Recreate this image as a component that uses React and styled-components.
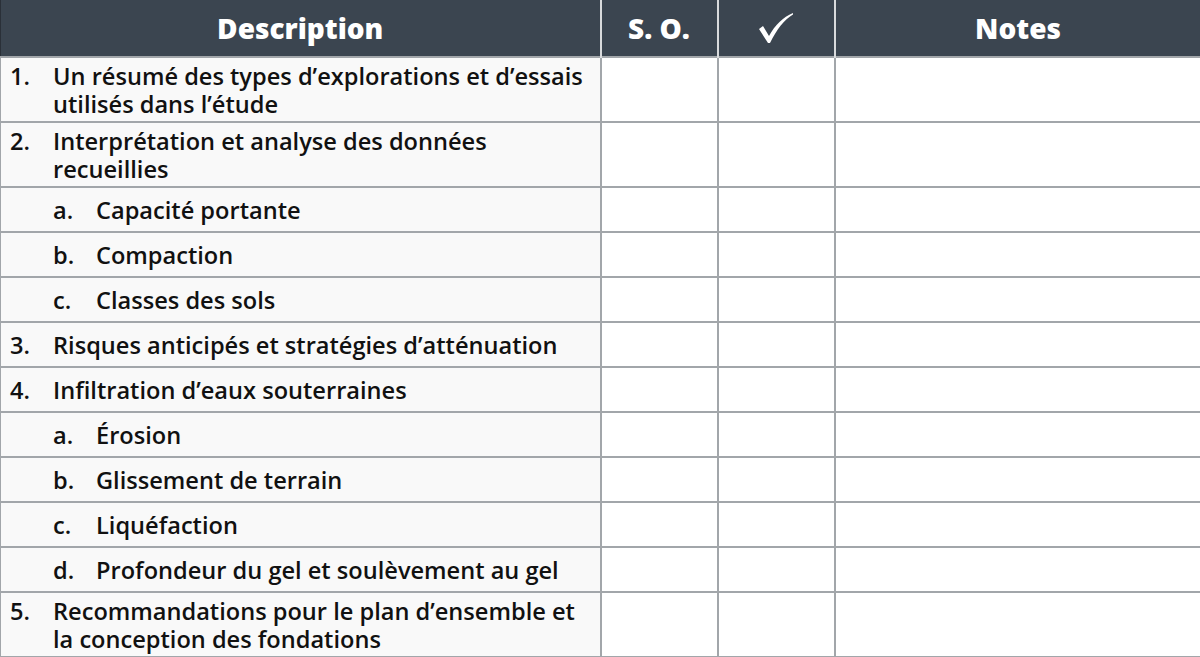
import React from 'react';
import styled, { createGlobalStyle } from 'styled-components';

const Global = createGlobalStyle`
    body {
        margin:0;
        background:#ffffff;
        font-family:"Open Sans", "Noto Sans", sans-serif;
    }
`;

const Table = styled.table`
    width:1200px;
    border-collapse:collapse;
    table-layout:fixed;
    color:#111111;
`;

const Head = styled.th`
    background-color:#3b4550;
    color:#ffffff;
    font-weight:800;
    font-size:28px;
    height:56px;
    padding:0;
    text-align:center;
    border-left:2px solid #d8dadc;
    &:first-child {
        border-left:1px solid #2a3038;
    }
`;

const Check = styled.svg`
    display:block;
    margin:0 auto;
    width:36px;
    height:32px;
`;

const Cell = styled.td`
    border:2px solid #a2a6aa;
    padding:0;
    height:${p => p.tall ? '63px' : '43px'};
    background-color:${p => p.shaded ? '#f9f9f9' : '#ffffff'};
    &:first-child {
        border-left-width:1px;
    }
`;

const Item = styled.div`
    display:flex;
    font-size:23.6px;
    font-weight:600;
    line-height:28px;
    padding-left:${p => p.sub ? '52px' : '9px'};
`;

const Marker = styled.span`
    flex:0 0 43px;
`;

const rows = [
    { m: '1.', t: <>Un résumé des types d’explorations et d’essais<br />utilisés dans l’étude</>, tall: true },
    { m: '2.', t: <>Interprétation et analyse des données<br />recueillies</>, tall: true },
    { m: 'a.', t: 'Capacité portante', sub: true },
    { m: 'b.', t: 'Compaction', sub: true },
    { m: 'c.', t: 'Classes des sols', sub: true },
    { m: '3.', t: 'Risques anticipés et stratégies d’atténuation' },
    { m: '4.', t: 'Infiltration d’eaux souterraines' },
    { m: 'a.', t: 'Érosion', sub: true },
    { m: 'b.', t: 'Glissement de terrain', sub: true },
    { m: 'c.', t: 'Liquéfaction', sub: true },
    { m: 'd.', t: 'Profondeur du gel et soulèvement au gel', sub: true },
    { m: '5.', t: <>Recommandations pour le plan d’ensemble et<br />la conception des fondations</>, tall: true },
];

export default function App() {
    return (
        <>
            <Global />
            <Table>
                <colgroup>
                    <col style={{ width: 600 }} />
                    <col style={{ width: 117 }} />
                    <col style={{ width: 117 }} />
                    <col style={{ width: 366 }} />
                </colgroup>
                <thead>
                    <tr>
                        <Head>Description</Head>
                        <Head>S. O.</Head>
                        <Head>
                            <Check viewBox="0 0 36 32">
                                <path d="M1 17 L5 14 L11 24 C17 13 25 5 35 1 L35 2.5 C26 8 19 17 12 31 L10 31 Z" fill="#ffffff" />
                            </Check>
                        </Head>
                        <Head>Notes</Head>
                    </tr>
                </thead>
                <tbody>
                    {rows.map((r, i) => (
                        <tr key={i}>
                            <Cell shaded tall={r.tall}>
                                <Item sub={r.sub}>
                                    <Marker>{r.m}</Marker>
                                    <span>{r.t}</span>
                                </Item>
                            </Cell>
                            <Cell tall={r.tall} />
                            <Cell tall={r.tall} />
                            <Cell tall={r.tall} />
                        </tr>
                    ))}
                </tbody>
            </Table>
        </>
    );
}
